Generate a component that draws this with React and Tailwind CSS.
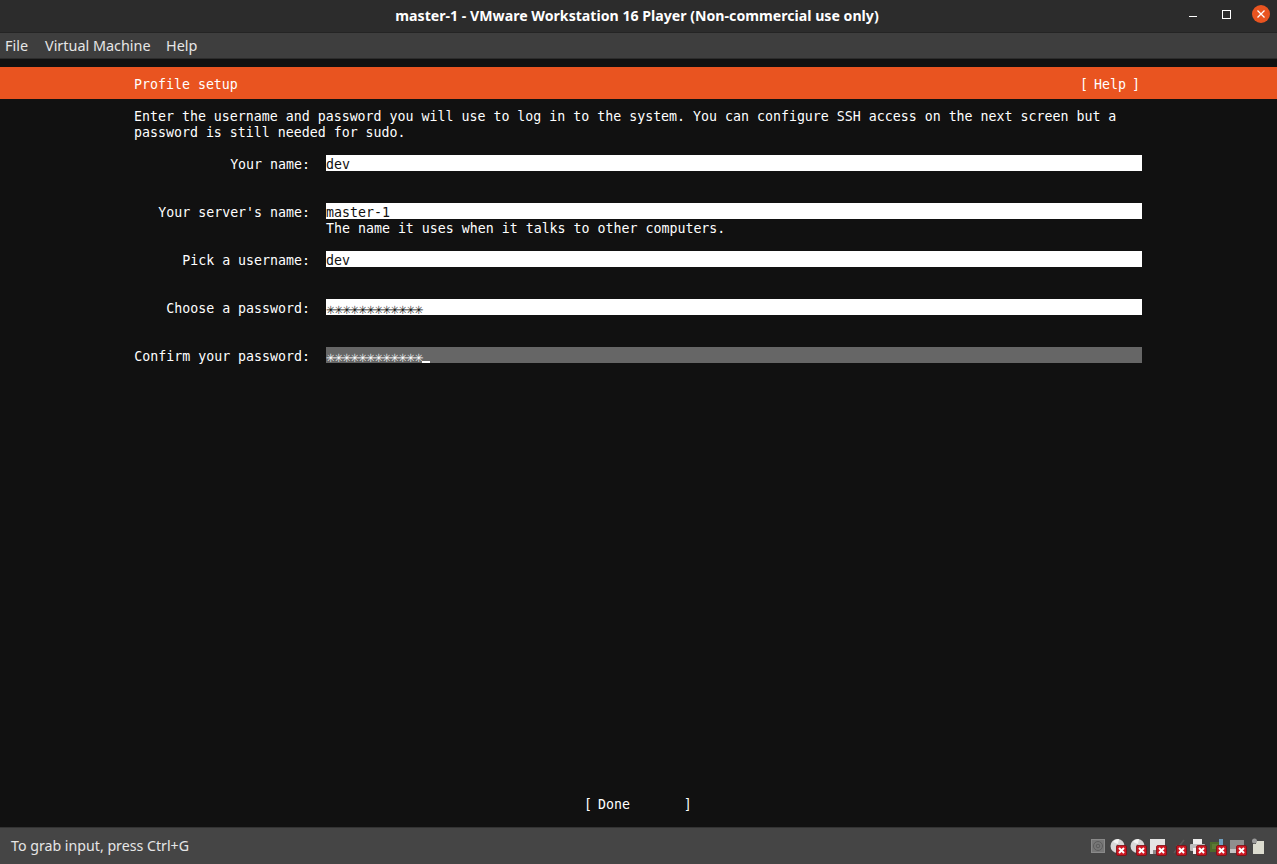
import React from "react";

const Badge = () => (
  <g>
    <rect x="6.5" y="9.5" width="10" height="10" rx="1.5" fill="#cc1722" stroke="#7a0e14" strokeWidth="0.8" />
    <path d="M9 12l5 5M14 12l-5 5" stroke="#fff" strokeWidth="2" />
  </g>
);

const Icon = ({ children, badge = true }) => (
  <svg width="20" height="20" viewBox="0 0 20 20" className="block shrink-0">
    {children}
    {badge && <Badge />}
  </svg>
);

const Disc = () => (
  <>
    <circle cx="7.5" cy="10" r="7" fill="#d8d8d8" />
    <path d="M3 6a7 7 0 0 1 6-3l-1 5z" fill="#f4f4f4" />
    <circle cx="7.5" cy="10" r="1.5" fill="#8c8c8c" />
  </>
);

const StatusIcons = () => (
  <div className="flex items-center">
    <Icon badge={false}>
      <rect x="1.5" y="3.5" width="13" height="13" fill="#777777" stroke="#8a8a8a" />
      <circle cx="8" cy="10" r="4.5" fill="none" stroke="#5c5c5c" />
      <circle cx="8" cy="10" r="1.8" fill="none" stroke="#5c5c5c" />
    </Icon>
    <Icon><Disc /></Icon>
    <Icon><Disc /></Icon>
    <Icon>
      <rect x="0" y="3" width="15" height="15" fill="#e4e4e4" />
      <rect x="3" y="14" width="9" height="4" fill="#8a8a8a" />
    </Icon>
    <Icon>
      <path d="M4 17L14 4" stroke="#5a5a5a" strokeWidth="1.6" />
      <path d="M6 9l5 5" stroke="#505050" strokeWidth="1.2" />
    </Icon>
    <Icon>
      <rect x="3" y="3" width="9" height="5" fill="#eeeeee" />
      <rect x="0" y="8" width="15" height="7" rx="1" fill="#bdbdbd" />
      <rect x="3" y="12" width="9" height="6" fill="#f2f2f2" />
    </Icon>
    <Icon>
      <rect x="0" y="6" width="11" height="10" fill="#4c6a2a" />
      <rect x="2" y="8" width="6" height="5" fill="#5d7a35" />
      <rect x="9" y="3" width="4" height="6" fill="#6f9fc0" />
    </Icon>
    <Icon>
      <rect x="0" y="4" width="14" height="9" fill="#8f8f8f" />
      <rect x="0" y="13" width="14" height="4" fill="#c4c4c4" />
    </Icon>
    <svg width="20" height="20" viewBox="0 0 20 20" className="block shrink-0">
      <path d="M6 5h8v13H3V8h3z" fill="#dcdccf" />
      <circle cx="4.5" cy="5" r="2.5" fill="#9a9a9a" />
    </svg>
  </div>
);

const Stars = ({ count }) => (
  <span className="inline-flex">
    {Array.from({ length: count }).map((_, i) => (
      <span key={i} className="inline-block w-2 text-center text-[15px]">✳</span>
    ))}
  </span>
);

const Brackets = ({ children }) => (
  <span>
    <span className="inline-block translate-x-[2px]">[</span>
    {children}
    <span className="inline-block -translate-x-[2px]">]</span>
  </span>
);

const Field = ({ label, value, help, active }) => (
  <div className={help ? "flex flex-col" : "flex flex-col mb-[16px]"}>
    <div className="flex h-4">
      <div className="w-[176px] text-right">{label}</div>
      <div className={`flex ml-4 w-[816px] h-4 ${active ? "bg-[#666666] text-white" : "bg-white text-[#111111]"}`}>
        {value}
        {active && <span className="self-end w-2 h-[2px] bg-white"></span>}
      </div>
    </div>
    <div className="h-4 pl-[192px]">{help}</div>
  </div>
);

export default function App() {
  return (
    <div className="w-[1277px] h-[864px] flex flex-col overflow-hidden bg-[#111111]">
      <div className="h-[33px] flex items-center justify-center relative bg-[#2c2c2c] border-b border-[#242424] text-white font-bold text-[14.15px] font-['Noto_Sans',sans-serif]">
        <span className="mr-[3px]">master-1 - VMware Workstation 16 Player (Non-commercial use only)</span>
        <div className="absolute right-[7px] top-[5px] flex items-center">
          <div className="w-[8px] h-[1px] bg-white mr-[25px] mt-[5px]"></div>
          <div className="w-[9px] h-[9px] border border-white mr-[21px]"></div>
          <div className="w-[18px] h-[18px] rounded-full bg-[#e95420] flex items-center justify-center">
            <svg width="10" height="10" viewBox="0 0 10 10">
              <path d="M1.5 1.5l7 7M8.5 1.5l-7 7" stroke="#fff" strokeWidth="1.3" />
            </svg>
          </div>
        </div>
      </div>

      <div className="h-[26px] flex items-center pl-[5px] bg-[#3e3e3e] border-b border-[#2c2c2c] text-[#e6e6e6] text-[14.4px] font-['Noto_Sans',sans-serif]">
        <span className="w-[40px]">File</span>
        <span className="w-[121px]">Virtual Machine</span>
        <span>Help</span>
      </div>

      <div className="flex-1 flex flex-col text-white text-[13.28px] leading-5 font-['DejaVu_Sans_Mono',monospace] whitespace-pre pt-2">
        <div className="h-8 flex items-center justify-between bg-[#e95420] pl-[134px] pr-[135px]">
          <span className="h-4">Profile setup</span>
          <span className="h-4"><Brackets> Help </Brackets></span>
        </div>
        <div className="pl-[134px] mt-2">
          <div className="h-4">Enter the username and password you will use to log in to the system. You can configure SSH access on the next screen but a</div>
          <div className="h-4">password is still needed for sudo.</div>
          <div className="mt-4">
            <Field label="Your name:" value="dev" />
            <Field label="Your server's name:" value="master-1" help="The name it uses when it talks to other computers." />
            <div className="h-4"></div>
            <Field label="Pick a username:" value="dev" />
            <Field label="Choose a password:" value={<Stars count={12} />} />
            <Field label="Confirm your password:" value={<Stars count={12} />} active />
          </div>
        </div>
        <div className="mt-auto mb-[16px] h-4 pl-[582px]"><Brackets> Done       </Brackets></div>
      </div>

      <div className="h-[37px] flex items-center justify-between pl-[11px] pr-[7px] bg-[#454545] border-t border-[#333333] text-[#e6e6e6] text-[14.2px] font-['Noto_Sans',sans-serif]">
        <span>To grab input, press Ctrl+G</span>
        <StatusIcons />
      </div>
    </div>
  );
}
